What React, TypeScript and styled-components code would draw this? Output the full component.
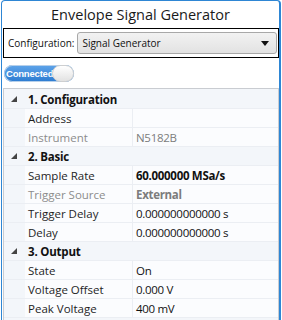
import React from 'react';
import styled, {createGlobalStyle} from "styled-components";

type Row =
    | { kind: "category"; title: string }
    | { kind: "prop"; name: string; value: string; readOnly?: boolean; bold?: boolean }

const rows: Row[] = [
    {kind: "category", title: "1. Configuration"},
    {kind: "prop", name: "Address", value: ""},
    {kind: "prop", name: "Instrument", value: "N5182B", readOnly: true},
    {kind: "category", title: "2. Basic"},
    {kind: "prop", name: "Sample Rate", value: "60.000000 MSa/s", bold: true},
    {kind: "prop", name: "Trigger Source", value: "External", readOnly: true, bold: true},
    {kind: "prop", name: "Trigger Delay", value: "0.000000000000 s"},
    {kind: "prop", name: "Delay", value: "0.000000000000 s"},
    {kind: "category", title: "3. Output"},
    {kind: "prop", name: "State", value: "On"},
    {kind: "prop", name: "Voltage Offset", value: "0.000 V"},
    {kind: "prop", name: "Peak Voltage", value: "400 mV"},
]

const GlobalStyle = createGlobalStyle`
    * {
        box-sizing: border-box;
    }

    body {
        margin: 0;
        background: #fff;
        font-family: "Open Sans", "Noto Sans", sans-serif;
        color: #1e1e1e;
    }
`

export default function App() {
    return (
        <>
            <GlobalStyle/>
            <Window>
                <Title>Envelope Signal Generator</Title>
                <ConfigBar>
                    <ConfigLabel>Configuration:</ConfigLabel>
                    <Select>
                        <span>Signal Generator</span>
                        <Arrow/>
                    </Select>
                </ConfigBar>
                <ToggleRow>
                    <Toggle>
                        <ToggleText>Connected</ToggleText>
                        <Knob/>
                    </Toggle>
                </ToggleRow>
                <Grid>
                    {rows.map((row, i) => row.kind === "category" ? (
                        <CategoryRow key={i}>
                            <Gutter><Expander/></Gutter>
                            <CategoryTitle>{row.title}</CategoryTitle>
                        </CategoryRow>
                    ) : (
                        <PropRow key={i}>
                            <Gutter/>
                            <NameCell $muted={row.readOnly}>{row.name}</NameCell>
                            <ValueCell $muted={row.readOnly} $bold={row.bold}>{row.value}</ValueCell>
                        </PropRow>
                    ))}
                </Grid>
            </Window>
        </>
    );
}

const Window = styled.div`
    width: 280px;
    height: 320px;
    margin-left: 1px;
    border: 1px solid #2e86d4;
    border-right-width: 2px;
    border-bottom: none;
    border-radius: 4px 4px 0 0;
    overflow: hidden;
    display: flex;
    flex-direction: column;
`

const Title = styled.div`
    height: 27px;
    display: flex;
    align-items: center;
    justify-content: center;
    font-size: 14.5px;
    color: #1a1a1a;
`

const ConfigBar = styled.div`
    height: 30px;
    margin: 0 0 0 1px;
    width: 276px;
    border: 1px solid #000;
    display: flex;
    align-items: center;
    padding: 0 1px 0 4px;
    gap: 3px;
`

const ConfigLabel = styled.span`
    font-size: 10px;
    color: #111;
`

const Select = styled.div`
    flex: 1;
    height: 22px;
    border: 1px solid #a8a8a8;
    border-radius: 3px;
    background: linear-gradient(#f2f2f2, #e2e2e2);
    display: flex;
    align-items: center;
    justify-content: space-between;
    padding: 0 7px 0 4px;
    font-size: 10px;
    color: #111;
`

const Arrow = styled.span`
    width: 0;
    height: 0;
    border-left: 4px solid transparent;
    border-right: 4px solid transparent;
    border-top: 5px solid #111;
`

const ToggleRow = styled.div`
    height: 30px;
    padding: 7px 0 0 2px;
`

const Toggle = styled.div`
    position: relative;
    width: 70px;
    height: 17px;
    border-radius: 9px;
    background: linear-gradient(#5ea4ea, #2c7bd0);
    display: flex;
    align-items: center;
    padding-left: 2px;
    box-shadow: inset 0 0 0 1px #b7d0ea;
`

const ToggleText = styled.span`
    font-family: "Liberation Sans", Arial, sans-serif;
    font-size: 9.5px;
    font-weight: 700;
    color: #fff;
    letter-spacing: -0.2px;
`

const Knob = styled.span`
    position: absolute;
    right: 0;
    top: 0;
    width: 22px;
    height: 17px;
    border-radius: 9px;
    background: linear-gradient(#ffffff, #e2e2e2);
    border: 1px solid #cfcfcf;
`

const Grid = styled.div`
    flex: 1;
    margin-left: 1px;
    width: 276px;
    padding-top: 1px;
    border: 1px solid #c9ccd1;
    border-bottom: none;
    background: #f3f6fa;
`

const RowBase = styled.div`
    height: 19px;
    display: flex;
    align-items: stretch;
    border-bottom: 1px solid #ebeef3;
    font-size: 11.5px;
`

const CategoryRow = styled(RowBase)`
    background: #f3f6fa;
`

const PropRow = styled(RowBase)`
    background: #fbfcfe;
`

const Gutter = styled.div`
    width: 21px;
    flex-shrink: 0;
    background: #f3f6fa;
    display: flex;
    align-items: center;
    justify-content: center;
`

const Expander = styled.span`
    width: 0;
    height: 0;
    border-left: 6px solid transparent;
    border-bottom: 6px solid #444;
    margin-left: -2px;
`

const CategoryTitle = styled.div`
    display: flex;
    align-items: center;
    padding-left: 3px;
    font-weight: 700;
    color: #111;
    letter-spacing: -0.2px;
`

const NameCell = styled.div<{ $muted?: boolean }>`
    width: 108px;
    flex-shrink: 0;
    display: flex;
    align-items: center;
    padding-left: 3px;
    border-right: 1px solid #ebeef3;
    color: ${p => p.$muted ? "#8c8c8c" : "#1e1e1e"};
`

const ValueCell = styled.div<{ $muted?: boolean; $bold?: boolean }>`
    flex: 1;
    display: flex;
    align-items: center;
    padding-left: 3px;
    letter-spacing: -0.3px;
    font-weight: ${p => p.$bold ? 700 : 400};
    color: ${p => p.$muted ? "#7c7c7c" : "#111"};
`
